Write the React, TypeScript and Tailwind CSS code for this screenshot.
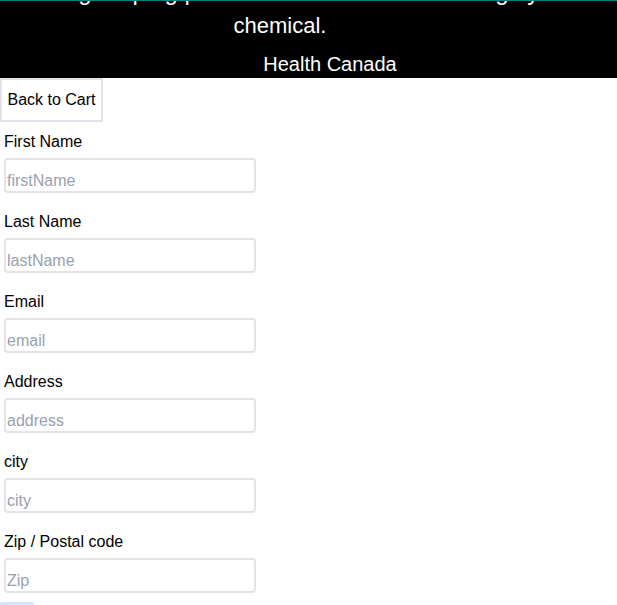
export default function App() {
  const fields = [
    { label: "First Name", placeholder: "firstName" },
    { label: "Last Name", placeholder: "lastName" },
    { label: "Email", placeholder: "email" },
    { label: "Address", placeholder: "address" },
    { label: "city", placeholder: "city" },
    { label: "Zip / Postal code", placeholder: "Zip" },
  ];

  return (
    <div className="h-[605px] overflow-hidden bg-white text-black font-['Liberation_Sans',Arial,sans-serif]">
      {/* Warning banner (page is scrolled a bit, first line is cut) */}
      <header className="h-[78px] overflow-hidden bg-black text-white border-t border-[#0b7f86]">
        <p className="-mt-[26px] pl-[3px] text-[24px] leading-[34px] whitespace-nowrap">
          Warning: Vaping products contain nicotine a highly addictive
        </p>
        <p className="w-[560px] text-center text-[22px] leading-[33px]">chemical.</p>
        <p className="mt-[8px] w-[660px] text-center text-[20px] leading-[28px]">Health Canada</p>
      </header>

      <button className="w-[103px] h-[44px] border-2 border-[#e2e2e8] bg-white text-[16px] text-black">
        Back to Cart
      </button>

      <form className="mt-2 pl-1">
        {fields.map((f) => (
          <div key={f.label} className="mb-[17px]">
            <label className="block text-[16px] leading-6">{f.label}</label>
            <input
              placeholder={f.placeholder}
              className="mt-1 block w-[252px] h-[35px] border-2 border-[#e3e3e8] rounded-[4px] px-[1px] pt-[10px] pb-0 text-[16px] placeholder:text-[#9aa0ae] outline-none"
            />
          </div>
        ))}
      </form>
      <button className="-mt-[8px] block w-[34px] h-[30px] bg-[#d3e5fb] rounded-[2px]" />
    </div>
  );
}
